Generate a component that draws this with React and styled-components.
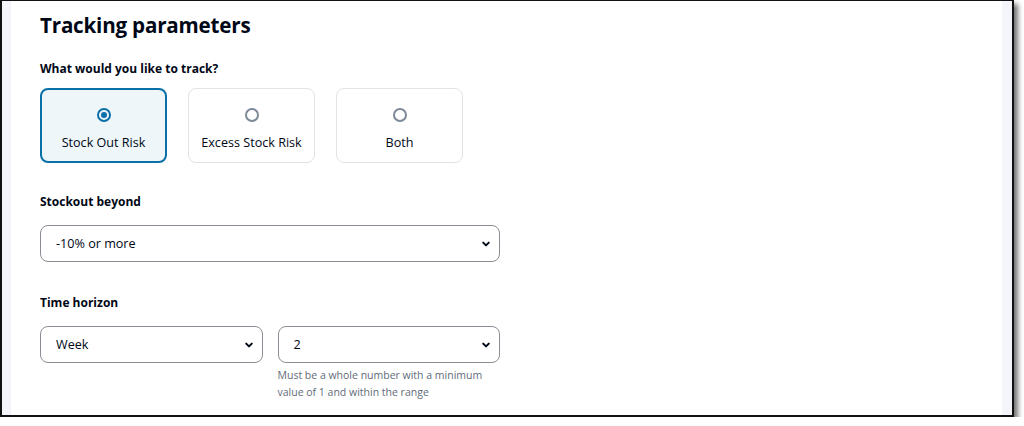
import React, { useState } from "react";
import styled, { createGlobalStyle } from "styled-components";

const GlobalStyle = createGlobalStyle`
  html, body {
    margin: 0;
    padding: 0;
    background: #ffffff;
  }
  body {
    font-family: "Open Sans", "Noto Sans", Arial, sans-serif;
    color: #000716;
  }
`;

const Frame = styled.div`
  width: 1010px;
  height: 414px;
  border: 2px solid #111111;
  border-top-width: 1px;
  box-shadow: 4px 4px 5px rgba(0, 0, 0, 0.55);
  display: flex;
  background: #ffffff;
`;

const Gutter = styled.div`
  width: ${(p) => p.$w}px;
  background: #f4f5fa;
  flex-shrink: 0;
`;

const Main = styled.div`
  flex: 1;
  padding: 9px 0 0 29px;
  overflow: hidden;
`;

const Title = styled.h2`
  margin: 0 0 20px;
  font-size: 20.6px;
  line-height: 30px;
  font-weight: 700;
  letter-spacing: -0.2px;
`;

const Label = styled.div`
  font-size: 12px;
  line-height: 18px;
  font-weight: 700;
  margin: 0 0 ${(p) => p.$mb}px;
`;

const Tiles = styled.div`
  display: flex;
  gap: 21px;
  margin-bottom: 30px;
`;

const Tile = styled.button`
  width: 127px;
  height: 75px;
  box-sizing: border-box;
  border-radius: 8px;
  border: ${(p) => (p.$active ? "2px solid #0b6fa8" : "1px solid #e1e3e8")};
  background: ${(p) => (p.$active ? "#eef6fa" : "#ffffff")};
  display: flex;
  flex-direction: column;
  align-items: center;
  padding: ${(p) => (p.$active ? "18px 0 0" : "19px 0 0")};
  gap: 12px;
  font-family: inherit;
  font-size: 12.6px;
  color: #000716;
  cursor: pointer;
`;

const Radio = styled.span`
  width: 14px;
  height: 14px;
  box-sizing: border-box;
  border-radius: 50%;
  border: 2px solid ${(p) => (p.$on ? "#0b6fa8" : "#7d8998")};
  display: flex;
  align-items: center;
  justify-content: center;
  &::after {
    content: "";
    width: 6px;
    height: 6px;
    border-radius: 50%;
    background: ${(p) => (p.$on ? "#0b6fa8" : "transparent")};
  }
`;

const Field = styled.div`
  margin-bottom: ${(p) => p.$mb}px;
`;

const Row = styled.div`
  display: flex;
  gap: 15px;
  width: 460px;
`;

const Column = styled.div`
  flex: 1;
`;

const Select = styled.div`
  width: ${(p) => p.$w || "460px"};
  height: 37px;
  box-sizing: border-box;
  border: 1px solid #8c8c94;
  border-radius: 8px;
  display: flex;
  align-items: center;
  justify-content: space-between;
  padding: 0 8px 0 15px;
  font-size: 12.6px;
  color: #000716;
`;

const Help = styled.div`
  margin-top: 4px;
  font-size: 10.5px;
  line-height: 17px;
  color: #5f6b7a;
`;

const Chevron = () => (
  <svg width="10" height="10" viewBox="0 0 10 10">
    <path d="M2.2 3.6 L5 6.4 L7.8 3.6" fill="none" stroke="#000716" strokeWidth="2" strokeLinecap="round" strokeLinejoin="round" />
  </svg>
);

const options = ["Stock Out Risk", "Excess Stock Risk", "Both"];

export default function App() {
  const [choice, setChoice] = useState(0);
  return (
    <>
      <GlobalStyle />
      <Frame>
        <Gutter $w={9} />
        <Main>
          <Title>Tracking parameters</Title>
          <Label $mb={10}>What would you like to track?</Label>
          <Tiles>
            {options.map((o, i) => (
              <Tile key={o} $active={choice === i} onClick={() => setChoice(i)}>
                <Radio $on={choice === i} />
                {o}
              </Tile>
            ))}
          </Tiles>
          <Field $mb={32}>
            <Label $mb={14}>Stockout beyond</Label>
            <Select>
              -10% or more
              <Chevron />
            </Select>
          </Field>
          <Field>
            <Label $mb={14}>Time horizon</Label>
            <Row>
              <Column>
                <Select $w="100%">
                  Week
                  <Chevron />
                </Select>
              </Column>
              <Column>
                <Select $w="100%">
                  2
                  <Chevron />
                </Select>
                <Help>
                  Must be a whole number with a minimum
                  <br />
                  value of 1 and within the range
                </Help>
              </Column>
            </Row>
          </Field>
        </Main>
        <Gutter $w={10} />
      </Frame>
    </>
  );
}
